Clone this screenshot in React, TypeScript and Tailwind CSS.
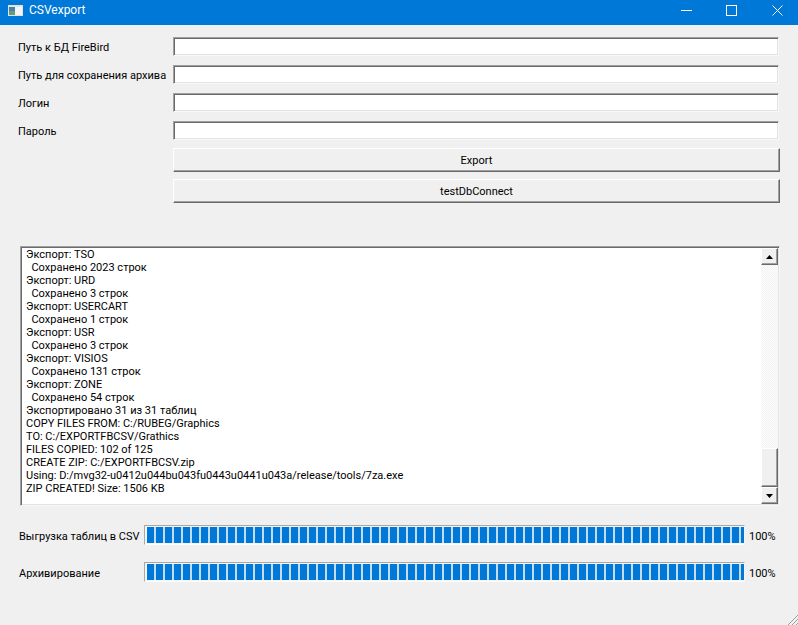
import React from "react";

const log = [
  "Экспорт: TSO",
  "  Сохранено 2023 строк",
  "Экспорт: URD",
  "  Сохранено 3 строк",
  "Экспорт: USERCART",
  "  Сохранено 1 строк",
  "Экспорт: USR",
  "  Сохранено 3 строк",
  "Экспорт: VISIOS",
  "  Сохранено 131 строк",
  "Экспорт: ZONE",
  "  Сохранено 54 строк",
  "Экспортировано 31 из 31 таблиц",
  "COPY FILES FROM: C:/RUBEG/Graphics",
  "TO: C:/EXPORTFBCSV/Grathics",
  "FILES COPIED: 102 of 125",
  "CREATE ZIP: C:/EXPORTFBCSV.zip",
  "Using: D:/mvg32-u0412u044bu043fu0443u0441u043a/release/tools/7za.exe",
  "ZIP CREATED! Size: 1506 KB",
];

const sunken =
  "bg-white border border-t-[#a0a0a0] border-l-[#a0a0a0] border-r-[#f8f8f8] border-b-[#f8f8f8] shadow-[inset_1px_1px_0_#696969,inset_-1px_-1px_0_#e3e3e3]";
const raised =
  "bg-[#f0f0f0] border border-t-white border-l-white border-r-[#696969] border-b-[#696969] shadow-[inset_-1px_-1px_0_#a0a0a0]";

function Field({ label }: { label: string }) {
  return (
    <div className="flex items-center h-[19px]">
      <div className="w-[155px] shrink-0 pt-[1px] text-[11px] leading-[19px] text-black">{label}</div>
      <div className={`h-[19px] w-[606px] ${sunken}`} />
    </div>
  );
}

function Btn({ label }: { label: string }) {
  return (
    <div className={`ml-[173px] w-[607px] h-[24px] pt-[2px] flex items-center justify-center text-[11px] text-black ${raised}`}>
      {label}
    </div>
  );
}

function Progress({ label }: { label: string }) {
  return (
    <div className="flex items-start h-[22px] pl-[19px]">
      <div className="w-[125px] shrink-0 pt-[1px] text-[11px] leading-[22px] text-black">{label}</div>
      <div className="w-[601px] h-[20px] shrink-0 border border-t-[#a8a8a8] border-l-[#a8a8a8] border-r-[#f4f4f4] border-b-[#ffffff] bg-[#f6f6f6] p-[1px] pr-0">
        <div className="h-full pl-[1px] flex">
          <div className="h-full w-full flex gap-[2px] overflow-hidden bg-[#c4dcf0]">
            {Array.from({ length: 67 }).map((_, i) => (
              <div key={i} className="w-[7px] shrink-0 bg-[#0078d7]" />
            ))}
          </div>
        </div>
      </div>
      <div className="ml-[4px] pt-[1px] text-[11px] leading-[22px] text-black">100%</div>
    </div>
  );
}

export default function App() {
  return (
    <div
      className="relative w-[798px] h-[625px] bg-[#f0f0f0] overflow-hidden flex flex-col"
      style={{ fontFamily: 'Roboto, "Liberation Sans", sans-serif' }}
    >
      <div className="h-[25px] shrink-0 bg-[#0078d7] pb-[5px] flex items-center text-white">
        <svg className="ml-[8px]" width="15" height="11" viewBox="0 0 15 11">
          <rect width="15" height="11" fill="#dfe3e6" />
          <rect x="1" y="2" width="6" height="4" fill="#4f7f9f" />
          <rect x="1" y="6" width="6" height="4" fill="#5f9f7f" />
          <rect x="7" y="2" width="7" height="8" fill="#f4f4f4" />
        </svg>
        <span className="ml-[6px] text-[12px]">CSVexport</span>
        <div className="ml-auto flex items-center">
          <svg className="mr-[34px]" width="11" height="11" viewBox="0 0 11 11">
            <path d="M0 5.5H11" stroke="white" />
          </svg>
          <svg className="mr-[35px]" width="11" height="11" viewBox="0 0 11 11" fill="none">
            <rect x="0.5" y="0.5" width="10" height="10" stroke="white" />
          </svg>
          <svg className="mr-[15px]" width="11" height="11" viewBox="0 0 11 11" fill="none">
            <path d="M0.5 0.5L10.5 10.5M10.5 0.5L0.5 10.5" stroke="white" />
          </svg>
        </div>
      </div>

      <div className="pl-[18px] pt-[12px] flex flex-col gap-[9px]">
        <Field label="Путь к БД FireBird" />
        <Field label="Путь для сохранения архива" />
        <Field label="Логин" />
        <Field label="Пароль" />
      </div>

      <div className="mt-[8px] flex flex-col gap-[7px]">
        <Btn label="Export" />
        <Btn label="testDbConnect" />
      </div>

      <div className={`mt-[43px] ml-[20px] w-[760px] h-[260px] ${sunken} p-[1px] flex`}>
        <div className="flex-1 pl-[4px] text-[11px] leading-[13px] text-black whitespace-pre overflow-hidden">
          {log.map((l, i) => (
            <div key={i} className="h-[13px]">{l}</div>
          ))}
        </div>
        <div className="w-[17px] shrink-0 flex flex-col bg-[repeating-conic-gradient(#f0f0f0_0%_25%,#ffffff_0%_50%)] bg-[length:2px_2px]">
          <div className={`h-[17px] flex items-center justify-center ${raised}`}>
            <svg width="7" height="4" viewBox="0 0 7 4"><path d="M3.5 0L7 4H0Z" fill="black" /></svg>
          </div>
          <div className="flex-1" />
          <div className={`h-[39px] ${raised}`} />
          <div className={`h-[17px] flex items-center justify-center ${raised}`}>
            <svg width="7" height="4" viewBox="0 0 7 4"><path d="M0 0H7L3.5 4Z" fill="black" /></svg>
          </div>
        </div>
      </div>

      <div className="mt-[19px] flex flex-col gap-[15px]">
        <Progress label="Выгрузка таблиц в CSV" />
        <Progress label="Архивирование" />
      </div>

      <svg className="absolute right-0 bottom-0" width="12" height="12" viewBox="0 0 12 12">
        <path d="M2 12L12 2M6 12L12 6M10 12L12 10" stroke="#a0a0a0" />
      </svg>
    </div>
  );
}
